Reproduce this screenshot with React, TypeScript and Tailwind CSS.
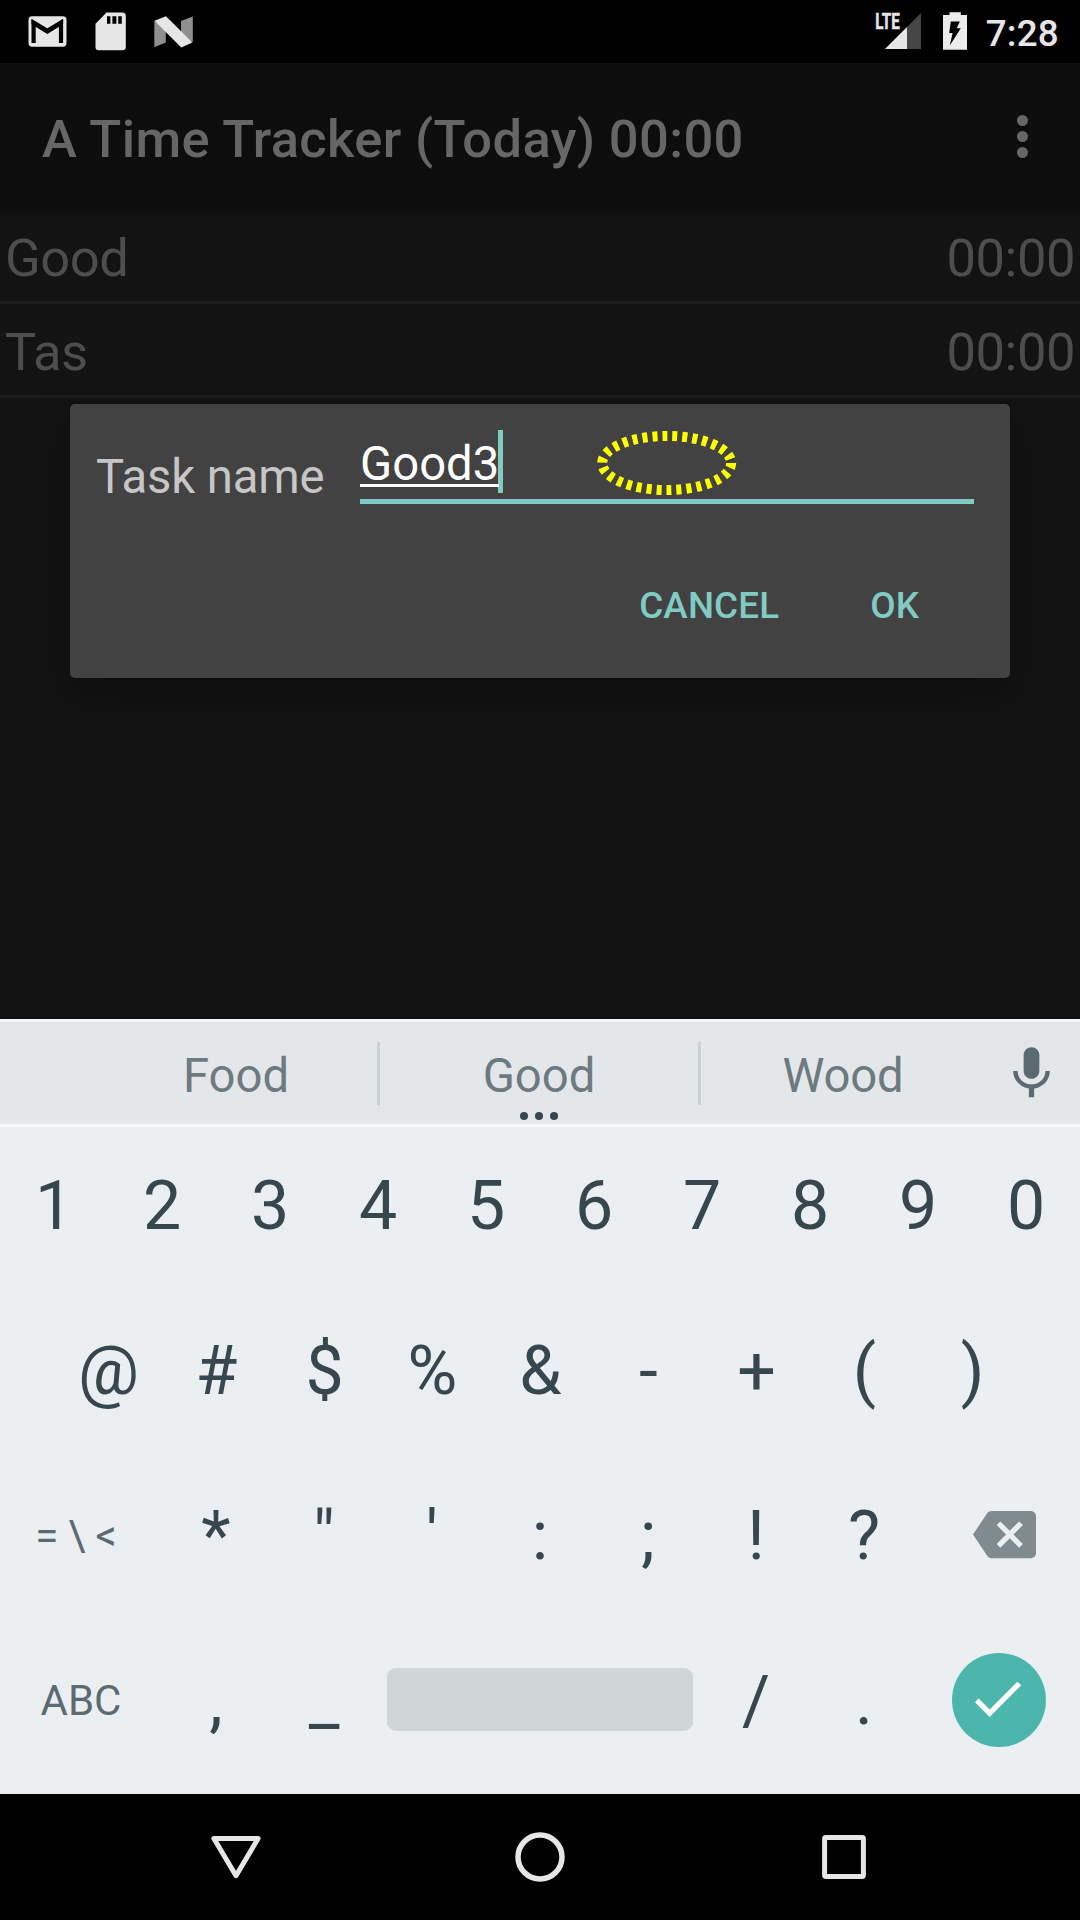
import React from "react";

function GmailIcon() {
  return (
    <svg className="h-[31px] w-[39px]" viewBox="0 0 39 31">
      <rect x="0.5" y="0.3" width="38" height="30.4" rx="3.6" fill="#e6e6e6" />
      <path d="M5.6 27V6.5L19.3 14.8L33 6.5V27" fill="none" stroke="#000" strokeWidth="4.2" />
      <path d="M3.5 3.6L19.3 13.6L35.1 3.6V8.2L19.3 18L3.5 8.2Z" fill="#000" />
    </svg>
  );
}

function SdCardIcon() {
  return (
    <svg className="h-[39px] w-[31px]" viewBox="0 0 31 39">
      <path d="M11.5 0.5H27.3Q30.8 0.5 30.8 4V35Q30.8 38.3 27.3 38.3H3.8Q0.5 38.3 0.5 35V11.8Z" fill="#e6e6e6" />
      <path d="M12 4.2h3.4v7.6H12zM17.4 4.2h4v7.6h-4zM23.2 4.2h3.6v7.6h-3.6z" fill="#000" />
    </svg>
  );
}

function NougatIcon() {
  return (
    <svg className="h-[32px] w-[39px]" viewBox="0 0 39 32">
      <path d="M0.3 4.8L11.8 12V26.5L0.3 31.2Z" fill="#8f8f8f" />
      <path d="M27 5L38.8 0.4V26L27 20Z" fill="#8f8f8f" />
      <path d="M0.6 4.8L12 0.2L38.4 26.6L27.2 31.4Z" fill="#e6e6e6" />
    </svg>
  );
}

function SignalIcon() {
  return (
    <svg className="h-[44px] w-[50px]" viewBox="0 0 50 44">
      <path d="M49 7V43H13Z" fill="#464646" />
      <path d="M35 21V43H13Z" fill="#e6e6e6" />
      <text
        x="3.2"
        y="23.2"
        fontFamily="Roboto, sans-serif"
        fontWeight="700"
        fontSize="22.5"
        textLength="24.5"
        lengthAdjust="spacingAndGlyphs"
        fill="#e6e6e6"
        stroke="#e6e6e6"
        strokeWidth="0.5"
      >
        LTE
      </text>
    </svg>
  );
}

function BatteryIcon() {
  return (
    <svg className="h-[38px] w-[24px]" viewBox="0 0 24 38">
      <path d="M6.5 0.3H17.8V3H24V37.8H0V3H6.5Z" fill="#ececec" />
      <path d="M7.8 9.4H16.8L13.8 16.2H17.8L6.8 33.4L9.6 21H6.2Z" fill="#000" />
    </svg>
  );
}

function StatusBar() {
  return (
    <div className="flex h-[63px] justify-between bg-black">
      <div className="flex pl-7">
        <div className="pt-4">
          <GmailIcon />
        </div>
        <div className="ml-7 pt-3">
          <SdCardIcon />
        </div>
        <div className="ml-7 pt-[15.5px]">
          <NougatIcon />
        </div>
      </div>
      <div className="flex pr-[21px]">
        <div className="pt-[6px]">
          <SignalIcon />
        </div>
        <div className="ml-[21px] pt-3">
          <BatteryIcon />
        </div>
        <span className="ml-[19px] pt-[2px] text-[36.75px] leading-[63px] font-medium tracking-[0.25px] text-[#e6e6e6]">7:28</span>
      </div>
    </div>
  );
}

function TitleBar() {
  return (
    <div className="relative z-10 flex h-[147px] items-center justify-between bg-[#0d0d0d] pt-[5px] pr-[52px] pl-[42px] text-[#666666] shadow-[0_3px_8px_rgba(0,0,0,0.3)]">
      <h1 className="text-[52.5px] leading-none font-medium tracking-[0.35px]">A Time Tracker (Today) 00:00</h1>
      <div className="flex -translate-y-[3px] flex-col gap-[5px]">
        <i className="size-[11px] rounded-full bg-[#666666]" />
        <i className="size-[11px] rounded-full bg-[#666666]" />
        <i className="size-[11px] rounded-full bg-[#666666]" />
      </div>
    </div>
  );
}

function TaskRow({ name, time }: { name: string; time: string }) {
  return (
    <div className="flex h-[94px] justify-between border-b-3 border-[#1d1d1d] px-[5px] pt-[5px] text-[52.5px] leading-[86px] tracking-[-0.45px] text-[#4d4d4d]">
      <span>{name}</span>
      <span>{time}</span>
    </div>
  );
}

function TaskDialog() {
  return (
    <div className="absolute top-[404px] left-[70px] flex h-[274px] w-[940px] flex-col rounded-[5px] bg-[#424242] shadow-[0_18px_44px_rgba(0,0,0,0.28)]">
      <div className="flex pr-9 pl-[26px] text-[47.25px]">
        <label className="w-[264px] pt-[43px] leading-[60px] tracking-[-0.12px] text-[#c6c6c6]">Task name</label>
        <div className="relative flex h-[100px] flex-1 items-start border-b-5 border-[#80cbc4] pt-[26px]">
          <div className="relative h-[57px] border-b-3 border-white leading-[68px] text-white">Good3</div>
          <i className="-ml-px h-[63px] w-[5px] bg-[#80cbc4]" />
          <svg className="absolute top-[26px] left-[236px] h-[66px] w-[142px]" viewBox="0 0 142 66">
            <ellipse cx="70.7" cy="33" rx="64.5" ry="27" fill="none" stroke="#ffff00" strokeWidth="10" strokeDasharray="5 5" />
          </svg>
        </div>
      </div>
      <div className="flex justify-end gap-[91px] pt-[70px] pr-[91px] text-[36.75px] leading-[57px] font-medium tracking-[0.15px] text-[#80cbc4]">
        <button>CANCEL</button>
        <button>OK</button>
      </div>
    </div>
  );
}

function Suggestions() {
  return (
    <div className="flex h-[108px] items-stretch border-y-3 border-[#f5f7f8] bg-[#e3e7e9] pl-[95px] text-[47.25px] leading-[102px] text-[#6d7a80]">
      <span className="w-[282px] pt-[3px] text-center">Food</span>
      <i className="mt-5 h-[63px] w-[3px] bg-[#cbd0d3]" />
      <span className="relative w-[318px] pt-[3px] text-center">
        Good
        <svg className="absolute top-[90px] left-[138.5px] h-2 w-10" viewBox="0 0 40 8" fill="#37474f">
          <circle cx="5" cy="4" r="4" />
          <circle cx="20" cy="4" r="4" />
          <circle cx="35" cy="4" r="4" />
        </svg>
      </span>
      <i className="mt-5 h-[63px] w-[3px] bg-[#cbd0d3]" />
      <span className="w-[282px] pt-[3px] pl-[2px] text-center tracking-[-0.2px]">Wood</span>
      <div className="flex flex-1 justify-center pt-5">
        <svg className="size-[63px]" viewBox="0 0 24 24" fill="#5c6b72">
          <path d="M12 14c1.66 0 2.99-1.34 2.99-3L15 5c0-1.66-1.34-3-3-3S9 3.34 9 5v6c0 1.66 1.34 3 3 3zm5.3-3c0 3-2.54 5.1-5.3 5.1S6.7 14 6.7 11H5c0 3.41 2.72 6.23 6 6.72V21h2v-3.28c3.28-.48 6-3.3 6-6.72h-1.7z" />
        </svg>
      </div>
    </div>
  );
}

function Keys({ chars }: { chars: string }) {
  return (
    <>
      {chars.split("").map((c) => (
        <button key={c} className="w-[108px] text-center">
          {c}
        </button>
      ))}
    </>
  );
}

function Keyboard() {
  return (
    <div className="h-[667px] bg-[#ebeff1] text-[68px] leading-none text-[#37474f]">
      <div className="flex h-[161px] items-center pb-1">
        <Keys chars="1234567890" />
      </div>
      <div className="flex h-[165px] items-center justify-center pl-px">
        <Keys chars="@#$%&-+()" />
      </div>
      <div className="flex h-[165px] items-center">
        <button className="w-[162px] pr-[10px] text-[42px] tracking-[-0.2px] text-[#5c6b72]">= \ &lt;</button>
        <Keys chars={"*\"':;!?"} />
        <div className="flex flex-1 justify-center pb-[2px] pl-[11px]">
          <svg className="size-[63px]" viewBox="0 0 24 24" fill="#808b90">
            <path d="M22 3H7c-.69 0-1.23.35-1.59.88L0 12l5.41 8.11c.36.53.9.89 1.59.89h15c1.1 0 2-.9 2-2V5c0-1.1-.9-2-2-2zm-3 12.59L17.59 17 14 13.41 10.41 17 9 15.59 12.59 12 9 8.41 10.41 7 14 10.59 17.59 7 19 8.41 15.41 12 19 15.59z" />
          </svg>
        </div>
      </div>
      <div className="flex h-[165px] items-center">
        <button className="w-[162px] text-[42px] text-[#5c6b72]">ABC</button>
        <Keys chars=",_" />
        <button className="mx-[9px] mb-[2px] h-[63px] w-[306px] rounded-[9px] bg-[#d0d5d8]" />
        <Keys chars="/." />
        <div className="flex flex-1 justify-center pb-[2px]">
          <div className="flex size-[94px] items-center justify-center rounded-full bg-[#4db6ac]">
            <svg className="-mt-[2px] -ml-1 size-[63px]" viewBox="0 0 24 24" fill="#fff">
              <path d="M9 16.17L4.83 12l-1.42 1.41L9 19 21 7l-1.41-1.41z" />
            </svg>
          </div>
        </div>
      </div>
    </div>
  );
}

function NavBar() {
  return (
    <div className="flex h-[126px] items-center justify-center gap-[252px] bg-black">
      <svg className="size-[52px]" viewBox="0 0 52 52" fill="none" stroke="#e6e6e6" strokeWidth="5" strokeLinejoin="round">
        <path d="M3.9 7.5H48.1L26 44.7Z" />
      </svg>
      <svg className="size-[52px]" viewBox="0 0 52 52" fill="none" stroke="#e6e6e6" strokeWidth="5.5">
        <circle cx="26" cy="26" r="22" />
      </svg>
      <svg className="size-[52px]" viewBox="0 0 52 52" fill="none" stroke="#e6e6e6" strokeWidth="5" strokeLinejoin="round">
        <rect x="6.6" y="6.6" width="38.8" height="38.8" rx="1.2" />
      </svg>
    </div>
  );
}

export default function App() {
  return (
    <div className="relative h-[1920px] w-[1080px] overflow-hidden bg-[#131313] font-['Roboto',sans-serif]">
      <div className="h-[1019px]">
        <StatusBar />
        <TitleBar />
        <TaskRow name="Good" time="00:00" />
        <TaskRow name="Tas" time="00:00" />
      </div>
      <div className="relative z-20">
        <Suggestions />
        <Keyboard />
        <NavBar />
      </div>
      <TaskDialog />
    </div>
  );
}
